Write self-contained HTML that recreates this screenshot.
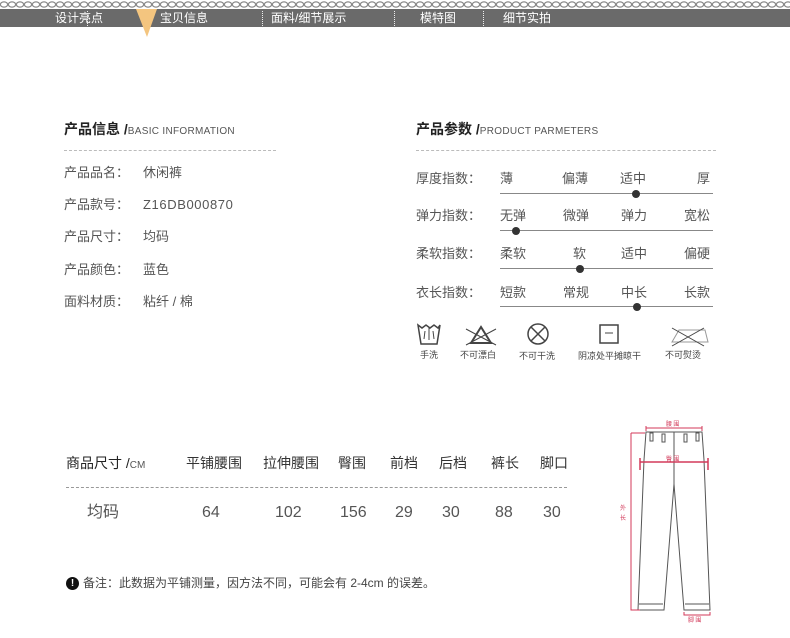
<!DOCTYPE html>
<html><head><meta charset="utf-8"><style>
*{margin:0;padding:0;box-sizing:border-box}
body{width:790px;height:638px;background:#fff;position:relative;overflow:hidden;font-family:"Liberation Sans","Noto Sans CJK SC",sans-serif;color:#555}
.a{position:absolute;white-space:nowrap;line-height:1}
.nav{position:absolute;left:0;top:9px;width:790px;height:18px;background:#6a6a6a}
.nav span{position:absolute;top:3px;color:#fff;font-size:12px;line-height:12px}
.sep{position:absolute;top:11px;height:15px;border-left:1px dotted #eee}
.t{font-size:14px;font-weight:bold;color:#222}
.t small{font-size:10px;font-weight:normal;color:#555;letter-spacing:.3px}
.dash{position:absolute;height:0;border-top:1px dashed #bbb}
.r{font-size:13px;color:#555}
.ln{position:absolute;height:1px;background:#888;left:500px;width:213px}
.dot{position:absolute;width:8px;height:8px;border-radius:50%;background:#333}
.ic{font-size:9px;color:#444}
</style></head><body>
<svg class="a" style="left:0;top:0" width="790" height="9"><defs><pattern id="p" width="8" height="9" patternUnits="userSpaceOnUse"><ellipse cx="4" cy="4.5" rx="3.6" ry="2.6" fill="none" stroke="#888" stroke-width="1.2"/></pattern></defs><rect width="790" height="9" fill="url(#p)"/></svg>
<div class="nav">
<span style="left:55px">设计亮点</span>
<span style="left:160px">宝贝信息</span>
<span style="left:271px">面料/细节展示</span>
<span style="left:420px">模特图</span>
<span style="left:503px">细节实拍</span>
</div>
<div class="sep" style="left:87px"></div><div class="sep" style="left:144px"></div><div class="sep" style="left:262px"></div><div class="sep" style="left:394px"></div><div class="sep" style="left:483px"></div>
<svg class="a" style="left:136px;top:9px" width="22" height="28"><polygon points="0,0 21,0 11,28" fill="#f4c57f"/></svg>

<div class="a t" style="left:64px;top:122px">产品信息 /<small>BASIC INFORMATION</small></div>
<div class="dash" style="left:64px;top:150px;width:212px"></div>
<div class="a r" style="left:64px;top:166px">产品品名：</div><div class="a r" style="left:143px;top:166px">休闲裤</div>
<div class="a r" style="left:64px;top:198px">产品款号：</div><div class="a r" style="left:143px;top:198px;letter-spacing:.6px">Z16DB000870</div>
<div class="a r" style="left:64px;top:230px">产品尺寸：</div><div class="a r" style="left:143px;top:230px">均码</div>
<div class="a r" style="left:64px;top:263px">产品颜色：</div><div class="a r" style="left:143px;top:263px">蓝色</div>
<div class="a r" style="left:64px;top:295px">面料材质：</div><div class="a r" style="left:143px;top:295px">粘纤 / 棉</div>

<div class="a t" style="left:416px;top:122px">产品参数 /<small>PRODUCT PARMETERS</small></div>
<div class="dash" style="left:416px;top:150px;width:300px"></div>

<div class="a r" style="left:416px;top:172px">厚度指数：</div>
<div class="a r" style="left:500px;top:172px">薄</div><div class="a r" style="left:562px;top:172px">偏薄</div><div class="a r" style="left:620px;top:172px">适中</div><div class="a r" style="left:697px;top:172px">厚</div>
<div class="ln" style="top:193px"></div><div class="dot" style="left:632px;top:190px"></div>

<div class="a r" style="left:416px;top:209px">弹力指数：</div>
<div class="a r" style="left:500px;top:209px">无弹</div><div class="a r" style="left:563px;top:209px">微弹</div><div class="a r" style="left:621px;top:209px">弹力</div><div class="a r" style="left:684px;top:209px">宽松</div>
<div class="ln" style="top:230px"></div><div class="dot" style="left:512px;top:227px"></div>

<div class="a r" style="left:416px;top:247px">柔软指数：</div>
<div class="a r" style="left:500px;top:247px">柔软</div><div class="a r" style="left:573px;top:247px">软</div><div class="a r" style="left:621px;top:247px">适中</div><div class="a r" style="left:684px;top:247px">偏硬</div>
<div class="ln" style="top:268px"></div><div class="dot" style="left:576px;top:265px"></div>

<div class="a r" style="left:416px;top:286px">衣长指数：</div>
<div class="a r" style="left:500px;top:286px">短款</div><div class="a r" style="left:563px;top:286px">常规</div><div class="a r" style="left:621px;top:286px">中长</div><div class="a r" style="left:684px;top:286px">长款</div>
<div class="ln" style="top:306px"></div><div class="dot" style="left:633px;top:303px"></div>

<svg class="a" style="left:414px;top:322px" width="310" height="26" fill="none" stroke="#444" stroke-width="1.5">
<path d="M4 3 L8 6 L12 3 L16 6 L20 3 L24 6 L26 3 L23 22 L7 22 Z"/><path d="M15 6 V18 M11 9 L10 17 M19 9 L20 17" stroke-width="1"/>
<path d="M57 21 L67 5 L77 21 Z" stroke-width="2"/><path d="M52 7 L82 23 M52 23 L82 7" stroke-width="1"/>
<circle cx="124" cy="12" r="10"/><path d="M117 5 L131 19 M131 5 L117 19"/>
<rect x="186" y="3" width="18" height="18"/><path d="M191 11 H199" stroke-width="1"/>
<path d="M258 20 L265 8 H291 L294 20 Z" stroke="#999" stroke-width="1"/><path d="M258 6 L290 24 M258 24 L290 6" stroke-width="1"/>
</svg>
<div class="a ic" style="left:420px;top:351px">手洗</div>
<div class="a ic" style="left:460px;top:351px">不可漂白</div>
<div class="a ic" style="left:519px;top:352px">不可干洗</div>
<div class="a ic" style="left:578px;top:352px">阴凉处平摊晾干</div>
<div class="a ic" style="left:665px;top:351px">不可熨烫</div>

<div class="a" style="left:66px;top:456px;font-size:14px;color:#222">商品尺寸 /<span style="font-size:10px;color:#555">CM</span></div>
<div class="a" style="left:186px;top:456px;font-size:14px;color:#333">平铺腰围</div>
<div class="a" style="left:263px;top:456px;font-size:14px;color:#333">拉伸腰围</div>
<div class="a" style="left:338px;top:456px;font-size:14px;color:#333">臀围</div>
<div class="a" style="left:390px;top:456px;font-size:14px;color:#333">前档</div>
<div class="a" style="left:439px;top:456px;font-size:14px;color:#333">后档</div>
<div class="a" style="left:491px;top:456px;font-size:14px;color:#333">裤长</div>
<div class="a" style="left:540px;top:456px;font-size:14px;color:#333">脚口</div>
<div class="dash" style="left:66px;top:487px;width:501px;border-color:#999"></div>
<div class="a" style="left:87px;top:505px;font-size:16px">均码</div>
<div class="a" style="left:202px;top:505px;font-size:16px">64</div>
<div class="a" style="left:275px;top:505px;font-size:16px">102</div>
<div class="a" style="left:340px;top:505px;font-size:16px">156</div>
<div class="a" style="left:395px;top:505px;font-size:16px">29</div>
<div class="a" style="left:442px;top:505px;font-size:16px">30</div>
<div class="a" style="left:495px;top:505px;font-size:16px">88</div>
<div class="a" style="left:543px;top:505px;font-size:16px">30</div>

<div class="a" style="left:66px;top:577px;width:13px;height:13px;border-radius:50%;background:#111;color:#fff;font-size:10px;font-weight:bold;text-align:center;line-height:13px">!</div>
<div class="a" style="left:83px;top:577px;font-size:12px;color:#444">备注：此数据为平铺测量，因方法不同，可能会有 2-4cm 的误差。</div>

<svg class="a" style="left:600px;top:400px" width="140" height="230" fill="none">
<g stroke="#555" stroke-width="1">
<path d="M46 32 L44 60 L38 210 L64 210 L74 84 L84 210 L110 210 L104 60 L102 32 Z"/>
<path d="M74 32 V84"/><path d="M39 204 H63 M85 204 H109"/>
<rect x="50" y="33" width="3" height="8"/><rect x="62" y="34" width="3" height="8"/><rect x="84" y="34" width="3" height="8"/><rect x="96" y="33" width="3" height="8"/>
</g>
<g stroke="#d33a5a" stroke-width="1">
<path d="M46 28 H102 M46 26 V31 M102 26 V31"/>
<path d="M40 62 H108 M40 58 V70 M108 58 V70" stroke-width="1.5"/>
<path d="M31 33 V210 H40 M31 33 H45"/>
<path d="M84 212 V215 H110 V212"/>
</g>
<g fill="#d33a5a" font-size="6" font-family="Noto Sans CJK SC,sans-serif">
<text x="66" y="26">腰 围</text><text x="66" y="61">臀 围</text>
<text x="20" y="110">外</text><text x="20" y="120">长</text><text x="88" y="222">脚 围</text>
</g>
</svg>
</body></html>
